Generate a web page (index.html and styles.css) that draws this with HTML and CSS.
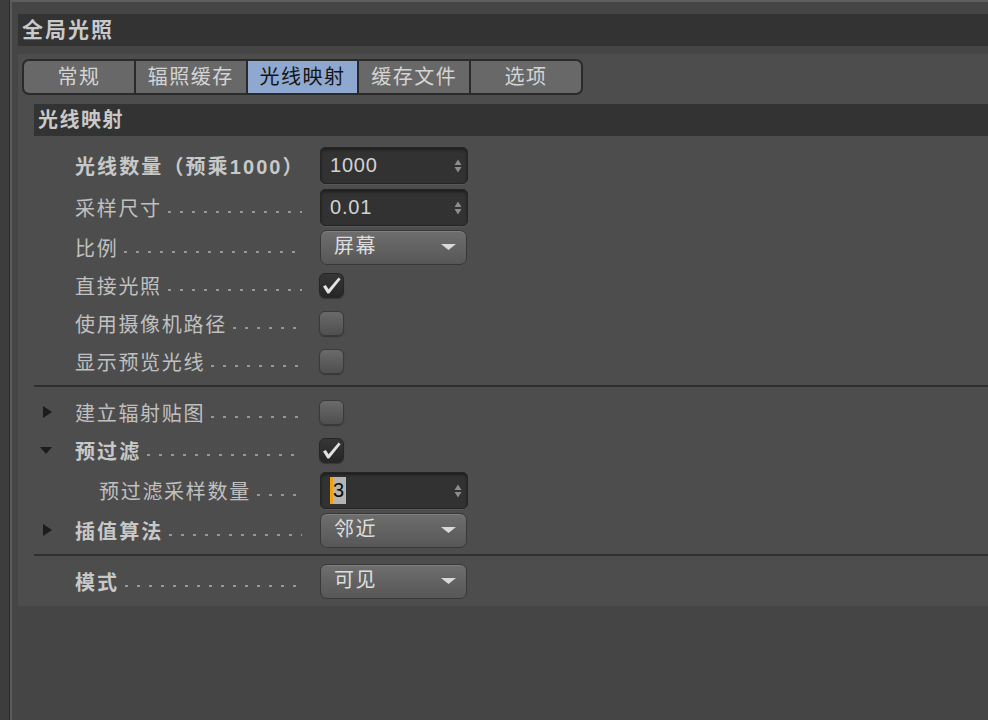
FILE: index.html
```html
<!DOCTYPE html>
<html lang="zh-CN">
<head>
    <meta charset="UTF-8">
    <title>全局光照</title>
    <link rel="stylesheet" href="styles.css">
</head>
<body>
    <div class="app">
        <div class="side"></div>
        <div class="main">
            <div class="title">全局光照</div>

            <div class="panel">
                <div class="tabs">
                    <div class="tab">常规</div>
                    <div class="tab">辐照缓存</div>
                    <div class="tab active">光线映射</div>
                    <div class="tab">缓存文件</div>
                    <div class="tab">选项</div>
                </div>

                <div class="group-title">光线映射</div>

                <div class="rows">
                    <div class="row tall">
                        <span class="twist"></span>
                        <span class="label bold">光线数量（预乘1000）<i class="dots"></i></span>
                        <div class="field">1000<svg class="spin" width="8" height="16" viewBox="0 0 8 16"><path d="M4 1.5 L7.5 7 L0.5 7 Z M4 14.5 L7.5 9 L0.5 9 Z" fill="#8c8c8c"/></svg></div>
                    </div>
                    <div class="row tall">
                        <span class="twist"></span>
                        <span class="label">采样尺寸<i class="dots"></i></span>
                        <div class="field">0.01<svg class="spin" width="8" height="16" viewBox="0 0 8 16"><path d="M4 1.5 L7.5 7 L0.5 7 Z M4 14.5 L7.5 9 L0.5 9 Z" fill="#8c8c8c"/></svg></div>
                    </div>
                    <div class="row">
                        <span class="twist"></span>
                        <span class="label">比例<i class="dots"></i></span>
                        <div class="select">屏幕<svg class="arrow" width="15" height="6" viewBox="0 0 15 6"><path d="M0 0 L15 0 L7.5 6 Z" fill="#d9d9d9"/></svg></div>
                    </div>
                    <div class="row">
                        <span class="twist"></span>
                        <span class="label">直接光照<i class="dots"></i></span>
                        <div class="check on"><svg width="25" height="25" viewBox="0 0 25 25"><path d="M4 13.5 L6.8 12 L9.6 16.2 L19.6 4.6 L21.6 6.2 L10.2 20.6 L8.4 20.6 Z" fill="#e2e2e2"/></svg></div>
                    </div>
                    <div class="row">
                        <span class="twist"></span>
                        <span class="label">使用摄像机路径<i class="dots"></i></span>
                        <div class="check"></div>
                    </div>
                    <div class="row">
                        <span class="twist"></span>
                        <span class="label">显示预览光线<i class="dots"></i></span>
                        <div class="check"></div>
                    </div>

                    <div class="sep"></div>

                    <div class="row">
                        <span class="twist"><i class="tri-right"></i></span>
                        <span class="label">建立辐射贴图<i class="dots"></i></span>
                        <div class="check"></div>
                    </div>
                    <div class="row">
                        <span class="twist"><i class="tri-down"></i></span>
                        <span class="label bold">预过滤<i class="dots"></i></span>
                        <div class="check on"><svg width="25" height="25" viewBox="0 0 25 25"><path d="M4 13.5 L6.8 12 L9.6 16.2 L19.6 4.6 L21.6 6.2 L10.2 20.6 L8.4 20.6 Z" fill="#e2e2e2"/></svg></div>
                    </div>
                    <div class="row tall">
                        <span class="twist"></span>
                        <span class="label indent">预过滤采样数量<i class="dots"></i></span>
                        <div class="field"><span class="caret"></span><span class="selected">3</span><svg class="spin" width="8" height="16" viewBox="0 0 8 16"><path d="M4 1.5 L7.5 7 L0.5 7 Z M4 14.5 L7.5 9 L0.5 9 Z" fill="#8c8c8c"/></svg></div>
                    </div>
                    <div class="row">
                        <span class="twist"><i class="tri-right"></i></span>
                        <span class="label bold">插值算法<i class="dots"></i></span>
                        <div class="select">邻近<svg class="arrow" width="15" height="6" viewBox="0 0 15 6"><path d="M0 0 L15 0 L7.5 6 Z" fill="#d9d9d9"/></svg></div>
                    </div>

                    <div class="sep"></div>

                    <div class="row">
                        <span class="twist"></span>
                        <span class="label bold">模式<i class="dots"></i></span>
                        <div class="select">可见<svg class="arrow" width="15" height="6" viewBox="0 0 15 6"><path d="M0 0 L15 0 L7.5 6 Z" fill="#d9d9d9"/></svg></div>
                    </div>
                </div>
            </div>
        </div>
    </div>
</body>
</html>
```

FILE: styles.css
```css
body{
    margin: 0;
    background-color: #454545;
    font-family: "Liberation Sans", "Noto Sans CJK SC", sans-serif;
    overflow: hidden;
}

.app{
    display: flex;
    height: 720px;
}

.side{
    width: 9px;
    background-color: #3d3d3d;
    border-right: 1px solid #2b2b2b;
}

.main{
    flex: 1;
    background-color: #454545;
    border-left: 2px solid #5a5a5a;
    border-top: 2px solid #5e5e5e;
    padding-top: 12px;
}

.title{
    margin-left: 6px;
    height: 32px;
    line-height: 32px;
    padding-left: 4px;
    background-color: #333333;
    color: #c9c9c9;
    font-size: 21px;
    font-weight: bold;
    letter-spacing: 2px;
}

.panel{
    margin: 8px 0 0 6px;
    padding: 5px 0 6px 4px;
    background-color: #4d4d4d;
}

.tabs{
    display: flex;
    width: 561px;
    height: 36px;
    box-sizing: border-box;
    border: 2px solid #2a2a2a;
    border-radius: 7px;
    overflow: hidden;
    background-color: #2a2a2a;
    gap: 2px;
}

.tab{
    flex: 1;
    background-color: #686868;
    color: #d4d4d4;
    font-size: 20px;
    letter-spacing: 1.5px;
    line-height: 32px;
    text-align: center;
}

.tab.active{
    background-color: #8ea8d0;
    color: #141414;
}

.group-title{
    margin: 9px 0 0 12px;
    height: 32px;
    line-height: 32px;
    padding-left: 4px;
    background-color: #333333;
    color: #c9c9c9;
    font-size: 20px;
    font-weight: bold;
    letter-spacing: 1.5px;
}

.rows{
    margin: 8px 0 0 12px;
}

.row{
    display: flex;
    align-items: center;
    height: 38px;
}

.row.tall{
    height: 42px;
}

.twist{
    width: 41px;
    display: flex;
    align-items: center;
    padding-left: 6px;
    box-sizing: border-box;
}

.tri-right{
    margin-left: 3px;
    border-left: 9px solid #1c1c1c;
    border-top: 6.5px solid transparent;
    border-bottom: 6.5px solid transparent;
}

.tri-down{
    border-top: 7px solid #1c1c1c;
    border-left: 6.5px solid transparent;
    border-right: 6.5px solid transparent;
}

.label{
    width: 227px;
    display: flex;
    align-items: center;
    color: #c0c0c0;
    font-size: 20px;
    letter-spacing: 1.7px;
    white-space: nowrap;
}

.label.bold{
    font-weight: bold;
    color: #c8c8c8;
    letter-spacing: 2.1px;
}

.label.indent{
    padding-left: 24px;
    box-sizing: border-box;
}

.dots{
    flex: 1;
    height: 2px;
    margin: 10px 0 0 6px;
    background-image: linear-gradient(90deg, #979797 3px, transparent 3px);
    background-size: 12px 2px;
}

.field{
    position: relative;
    margin-left: 18px;
    width: 148px;
    height: 37px;
    box-sizing: border-box;
    display: flex;
    align-items: center;
    padding-left: 9px;
    background-color: #323232;
    border: 1px solid #252525;
    border-radius: 5px;
    box-shadow: inset 0 2px 3px rgba(0, 0, 0, 0.4), 0 1px 0 rgba(255, 255, 255, 0.06);
    color: #d2d2d2;
    font-size: 20px;
    letter-spacing: 0.8px;
}

.spin{
    position: absolute;
    right: 5px;
    top: 10px;
}

.caret{
    width: 3px;
    height: 27px;
    background-color: #f5a20a;
}

.selected{
    height: 27px;
    line-height: 27px;
    padding-right: 1px;
    background-color: #b4b4b4;
    color: #0a0a0a;
}

.select{
    position: relative;
    margin-left: 18px;
    width: 147px;
    height: 35px;
    box-sizing: border-box;
    padding-left: 13px;
    line-height: 31px;
    background-image: linear-gradient(#6e6e6e, #575757);
    border: 1px solid #383838;
    border-radius: 7px;
    box-shadow: inset 0 1px 0 rgba(255, 255, 255, 0.12);
    color: #dedede;
    font-size: 20px;
    letter-spacing: 1.5px;
}

.arrow{
    position: absolute;
    right: 10px;
    top: 13px;
}

.check{
    margin-left: 17px;
    width: 25px;
    height: 25px;
    box-sizing: border-box;
    border: 1px solid #3a3a3a;
    border-radius: 6px;
    background-image: linear-gradient(#6a6a6a, #4f4f4f);
    box-shadow: 0 1px 1px rgba(0, 0, 0, 0.3);
}

.check.on{
    background-image: linear-gradient(#363636, #262626);
    border-color: #262626;
}

.check svg{
    display: block;
    margin: -1px;
}

.sep{
    height: 2px;
    margin: 5px 0 6px 0;
    background-color: #2f2f2f;
}
```
